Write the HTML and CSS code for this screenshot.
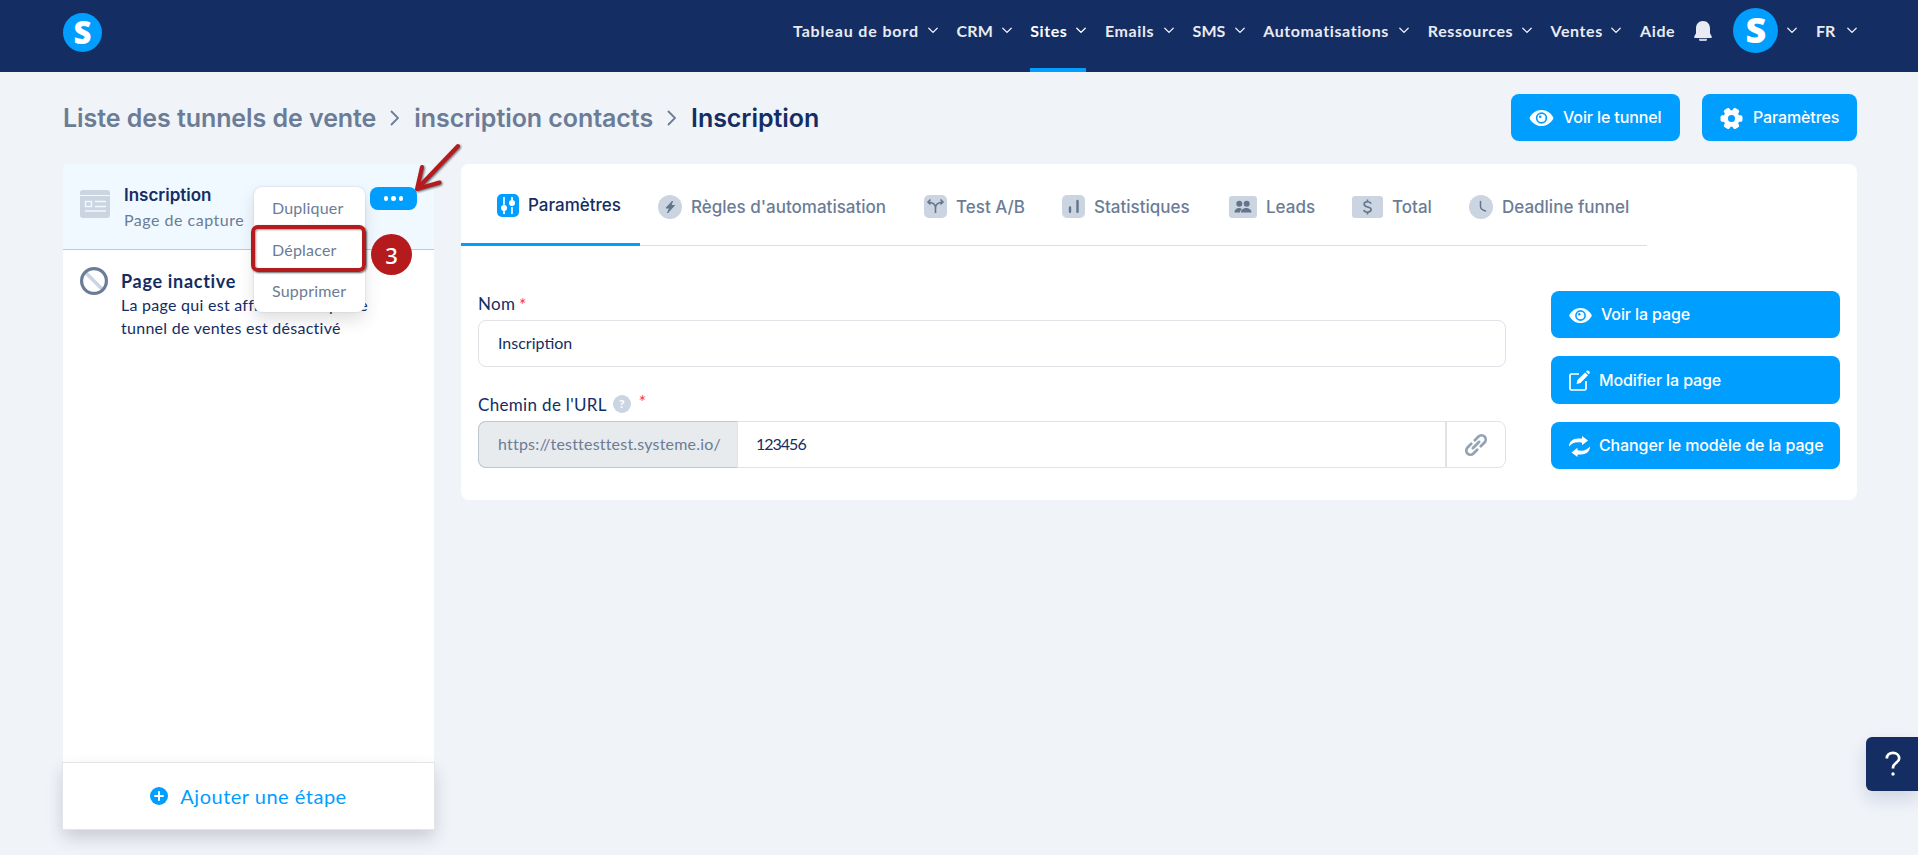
FILE: index.html
```html
<!DOCTYPE html>
<html lang="fr">
	<head>
		<meta charset="utf-8">
		<title>Inscription</title>
		<link rel="stylesheet" href="styles.css">
	</head>

	<body>
		<svg class="defs" width="0" height="0">
			<symbol id="down" viewBox="0 0 10 7"><path d="M.8 1.2L5 5.4 9.2 1.2" fill="none" stroke="currentColor" stroke-width="1.3" stroke-linecap="round"/></symbol>
			<symbol id="eye" viewBox="0 0 24 18"><path fill="currentColor" fill-rule="evenodd" d="M12 1C6.500 1 2.300 4.500.3 8.300a1.500 1.500 0 0 0 0 1.400C2.300 13.500 6.500 17 12 17s9.700-3.500 11.700-7.300a1.500 1.500 0 0 0 0-1.400C21.700 4.500 17.500 1 12 1zm0 2.300a5.700 5.700 0 1 1 0 11.400 5.700 5.700 0 0 1 0-11.400z"/><circle cx="12" cy="9" r="4" fill="currentColor"/><circle cx="10.700" cy="7.700" r="1.300" fill="#009eff"/></symbol>
		</svg>

		<header class="header">
			<div class="logo">S</div>
			<nav class="nav">
				<a class="w1">Tableau de bord<svg><use href="#down"/></svg></a>
				<a class="w2">CRM<svg><use href="#down"/></svg></a>
				<a class="w3 on">Sites<svg><use href="#down"/></svg></a>
				<a class="w4">Emails<svg><use href="#down"/></svg></a>
				<a class="w5">SMS<svg><use href="#down"/></svg></a>
				<a class="w6">Automatisations<svg><use href="#down"/></svg></a>
				<a class="w7">Ressources<svg><use href="#down"/></svg></a>
				<a class="w8">Ventes<svg><use href="#down"/></svg></a>
				<a class="w9">Aide</a>
				<svg class="bell" viewBox="0 0 18 20"><path fill="#e9ebf2" d="M9 0C4.500 0 2 3.300 2 7.500v4.800L.4 15.200c-.6 1 0 1.800 1 1.800h15.200c1 0 1.600-.8 1-1.800L16 12.300V7.500C16 3.300 13.500 0 9 0z"/><path fill="#c5cbdc" d="M5 17.800h8v.7c0 1-.8 1.500-1.700 1.500H6.700C5.800 20 5 19.500 5 18.500z"/></svg>
				<a class="user"><span class="logo avatar">S</span><svg><use href="#down"/></svg></a>
				<a class="lang">FR<svg><use href="#down"/></svg></a>
			</nav>
		</header>

		<div class="top">
			<div class="crumbs">
				<span>Liste des tunnels de vente</span>
				<svg viewBox="0 0 9 16"><path d="M1 1l7 7-7 7"/></svg>
				<span>inscription contacts</span>
				<svg viewBox="0 0 9 16"><path d="M1 1l7 7-7 7"/></svg>
				<b>Inscription</b>
			</div>
			<div class="actions">
				<a class="btn see"><svg width="25" height="18"><use href="#eye"/></svg>Voir le tunnel</a>
				<a class="btn conf"><svg width="23" height="23" viewBox="-12 -12 24 24"><g fill="#fff"><rect x="-3.500" y="-11.500" width="7" height="23" rx="2" transform="rotate(30)"/><rect x="-3.500" y="-11.500" width="7" height="23" rx="2" transform="rotate(90)"/><rect x="-3.500" y="-11.500" width="7" height="23" rx="2" transform="rotate(150)"/><circle r="8.600"/></g><circle r="3.700" fill="#009eff"/></svg>Paramètres</a>
			</div>
		</div>

		<div class="wrap">
			<aside class="side">
				<div class="step">
					<svg width="30" height="28" viewBox="0 0 30 28"><rect width="30" height="28" rx="3" fill="#cbd5e1"/><g fill="none" stroke="#f0f9ff"><path d="M0 5.500h30"/><rect x="5.500" y="11.500" width="6" height="5" stroke-width="1.400"/><path d="M15 11.500h11M15 16.500h11M5 21h21" stroke-width="1.400"/></g></svg>
					<div>
						<h3>Inscription</h3>
						<p>Page de capture</p>
					</div>
					<span class="dots"><i></i><i></i><i></i></span>
					<div class="menu">
						<a>Dupliquer</a>
						<a>Déplacer</a>
						<a>Supprimer</a>
					</div>
					<div class="frame"></div>
					<div class="num">3</div>
					<svg class="arrow" width="60" height="64" viewBox="0 0 60 64"><path d="M51 12L10 55M15 33L10 55M32.500 48.500L10 55"/></svg>
				</div>
				<div class="off">
					<svg width="28" height="28" viewBox="0 0 28 28"><path d="M6 6l16 16" stroke="#cbd5e1" stroke-width="3.500"/><circle cx="14" cy="14" r="12.400" fill="none" stroke="#6b7c96" stroke-width="3.200"/></svg>
					<div>
						<h3>Page inactive</h3>
						<p>La page qui est affichée lorsque le<br>tunnel de ventes est désactivé</p>
					</div>
				</div>
				<div class="add"><svg width="18" height="18" viewBox="0 0 18 18"><circle cx="9" cy="9" r="9" fill="#009eff"/><path d="M9 5v8M5 9h8" stroke="#fff" stroke-width="2" stroke-linecap="round"/></svg><span>Ajouter une étape</span></div>
			</aside>

			<main class="main">
				<div class="tabs">
					<a class="on t1"><svg width="22" height="23" viewBox="0 0 22 23"><rect width="22" height="23" rx="5" fill="#009eff"/><path d="M7 3.500v6M7 18v1.500M15 3.500v2M15 13.500v6" stroke="#fff" stroke-width="1.600" stroke-linecap="round"/><circle cx="7" cy="14" r="3" fill="#fff"/><circle cx="15" cy="9" r="3" fill="#fff"/><path d="M7 9v11M15 4v5" stroke="#fff" stroke-width="1.200"/></svg>Paramètres</a>
					<a class="t2"><svg width="24" height="24" viewBox="0 0 24 24"><circle cx="12" cy="12" r="12" fill="#cbd5e1"/><path fill="#64748b" stroke="#64748b" stroke-linejoin="round" d="M14.500 6L8 13h3.500l-2 5 7-7.500h-3.500z"/></svg>Règles d'automatisation</a>
					<a class="t3"><svg width="23" height="23" viewBox="0 0 23 23"><rect width="23" height="23" rx="5" fill="#cbd5e1"/><path d="M11.500 18v-5.500c0-4-3-5-7.500-5.500M11.500 12.500c0-4 3-5 7.500-5.500M6.500 4.500L4 7l2.500 2.500M16.500 4.500L19 7l-2.500 2.500" fill="none" stroke="#64748b" stroke-width="1.600"/></svg>Test A/B</a>
					<a class="t4"><svg width="23" height="23" viewBox="0 0 23 23"><rect width="23" height="23" rx="5" fill="#cbd5e1"/><path d="M8 12.500v4.300M15.500 6v10.800" stroke="#64748b" stroke-width="2.400" stroke-linecap="round"/></svg>Statistiques</a>
					<a class="t5"><svg width="28" height="22" viewBox="0 0 28 22"><rect width="28" height="22" rx="3" fill="#cbd5e1"/><g fill="#64748b"><circle cx="10.300" cy="7.700" r="3"/><circle cx="17.700" cy="7.700" r="3"/><path d="M5.500 16.500c0-3 2-4.500 4.500-4.500 1.300 0 2.300.4 3 1-1.300 1-1.900 2.200-2 3.500zM12 16.500c0-3 2.500-4.500 5.200-4.500s5.300 1.500 5.300 4.500z"/></g></svg>Leads</a>
					<a class="t6"><svg width="31" height="22" viewBox="0 0 31 22"><rect width="31" height="22" rx="3" fill="#cbd5e1"/><path d="M19 7.700C18.500 6.300 17.300 5.700 15.500 5.700c-2 0-3.400 1-3.400 2.500 0 3.700 7 1.800 7 5.400 0 1.600-1.500 2.600-3.600 2.600-2 0-3.300-.8-3.700-2.200M15.500 3.500v2M15.500 16.500v2" fill="none" stroke="#64748b" stroke-width="1.600"/></svg>Total</a>
					<a class="t7"><svg width="24" height="24" viewBox="0 0 24 24"><circle cx="12" cy="12" r="12" fill="#cbd5e1"/><path d="M11.500 6.500v5c0 2 1.500 3.500 5 4.500" fill="none" stroke="#64748b" stroke-width="1.500" stroke-linecap="round"/></svg>Deadline funnel</a>
				</div>

				<div class="body">
					<div class="form">
						<label>Nom<em>*</em></label>
						<div class="input"><span>Inscription</span></div>
						<label class="second">Chemin de l'URL<i class="q">?</i><em>*</em></label>
						<div class="input url">
							<span class="prefix">https://testtesttest.systeme.io/</span>
							<span class="path">123456</span>
							<span class="link"><svg width="24" height="24" viewBox="0 0 24 24"><g transform="rotate(-45 12 12)" fill="none" stroke="#94a3b3" stroke-width="2.700" stroke-linecap="round"><path d="M9.500 7.800H4.200a4.200 4.200 0 0 0 0 8.400h5.300M14.500 7.800h5.300a4.200 4.200 0 0 1 0 8.400h-5.300M7.500 12h9"/></g></svg></span>
						</div>
					</div>
					<div class="buttons">
						<a class="btn"><svg width="23" height="17"><use href="#eye"/></svg>Voir la page</a>
						<a class="btn tall"><svg width="21" height="21" viewBox="0 0 21 21"><path d="M10 4H2.500A1.500 1.500 0 0 0 1 5.500v13A1.500 1.500 0 0 0 2.500 20h13a1.500 1.500 0 0 0 1.500-1.500V11" fill="none" stroke="#fff" stroke-width="1.700"/><path d="M7.500 14l1-4 7.700-7.500 2.800 2.800-7.500 7.700zM17 1.700l.8-.9c1.400-1.400 4 1.200 2.600 2.600l-.7.900z" fill="#fff"/></svg>Modifier la page</a>
						<a class="btn"><svg width="21" height="21" viewBox="0 0 21 21"><path d="M0 10.500C0 5.500 4 2.500 9 2.500h4V0l6 4.500-6 4.800V6.700C7 5.500 3 7 0 10.500zM21 10.500c0 5-4 8-9 8H8.500V21l-6-4.500 6-4.800v2.600c6 1.200 9.500-.3 12.500-3.800z" fill="#fff"/></svg>Changer le modèle de la page</a>
					</div>
				</div>
			</main>
		</div>

		<div class="help"><svg width="16" height="26" viewBox="0 0 16 26"><path d="M1.800 7.500C1.800 4 4.500 1.800 8 1.800s6.200 2.400 6.200 5.600c0 4.200-6.200 4.600-6.200 9.100v1" fill="none" stroke="#fff" stroke-width="2.700"/><circle cx="8" cy="23" r="1.700" fill="#fff"/></svg></div>
	</body>
</html>
```
FILE: styles.css
```css
*{
	box-sizing: border-box;
}
body,h3,p{
	margin: 0;
	padding: 0;
}
body{
	height: 855px;
	overflow: hidden;
	background: #f0f3f8;
	color: #142d63;
	font-family: Lato, "Liberation Sans", sans-serif;
	font-size: 16px;
}
.defs{
	position: absolute;
}
.header{
	height: 72px;
	padding: 0 61px 0 63px;
	display: flex;
	justify-content: space-between;
	background: #142d63;
}
.logo{
	width: 39px;
	height: 39px;
	margin-top: 13px;
	border-radius: 50%;
	background: #009eff;
	color: #fff;
	font: 800 31px/38px "Open Sans", sans-serif;
	letter-spacing: 0;
	text-align: center;
}
.nav{
	display: flex;
	gap: 18.650px;
	color: #e9ebf2;
	font-weight: bold;
	letter-spacing: .6px;
}
.nav a{
	height: 72px;
	padding-bottom: 11px;
	display: flex;
	justify-content: space-between;
	align-items: center;
	white-space: nowrap;
}
.nav a svg{
	width: 10px;
	height: 7px;
	flex: none;
}
.nav .on{
	color: #fff;
	box-shadow: inset 0 -4px #009eff;
}
.w1{ width: 145px; letter-spacing: .85px; }
.w2{ width: 55px; letter-spacing: .1px; }
.w3{ width: 56px; }
.w4{ width: 69px; }
.w5{ width: 52px; letter-spacing: .1px; }
.w6{ width: 146px; }
.w7{ width: 104px; }
.w8{ width: 71px; }
.w9{ width: 34px; }
.bell{
	width: 18px;
	height: 20px;
	margin: 21px 0 0 1px;
}
.nav .user{
	width: 64px;
	margin-left: 3px;
}
.nav .lang{
	width: 41px;
	letter-spacing: 0;
}
.nav .avatar{
	width: 45px;
	height: 45px;
	margin: 0;
	font-size: 36px;
	line-height: 44px;
}
.top{
	height: 92px;
	padding: 22px 61px 0 63px;
	display: flex;
	justify-content: space-between;
}
.crumbs{
	height: 47px;
	display: flex;
	align-items: center;
	font: 600 25px Inter, sans-serif;
	letter-spacing: -.06px;
	color: #6b7c96;
}
.crumbs svg{
	width: 9px;
	height: 16px;
	margin: 0 15px 0 14px;
	fill: none;
	stroke: #6b7c96;
	stroke-width: 1.800;
}
.crumbs b{
	font-weight: 600;
	color: #142d63;
}
.actions{
	display: flex;
	gap: 22px;
}
.btn{
	height: 47px;
	padding: 0 0 1px 18px;
	display: flex;
	align-items: center;
	gap: 9px;
	border-radius: 8px;
	background: #009eff;
	color: #fff;
	font: 500 16px Inter, sans-serif;
	letter-spacing: -.12px;
	white-space: nowrap;
}
.btn svg{
	position: relative;
	top: 1px;
}
.see{
	width: 169px;
}
.conf{
	width: 155px;
	gap: 10px;
}
.wrap{
	padding: 0 61px 0 63px;
	display: flex;
	align-items: flex-start;
	gap: 27px;
}
.side{
	width: 371px;
	height: 666px;
	display: flex;
	flex-direction: column;
	background: #fff;
	border-radius: 6px 6px 0 0;
}
.step{
	position: relative;
	height: 86px;
	padding: 20px 0 0 17px;
	display: flex;
	gap: 14px;
	border-radius: 6px 6px 0 0;
	border-bottom: 1px solid #b9cbdb;
	background: #f0f9ff;
}
.step > svg:first-child{
	margin-top: 6px;
}
h3{
	font: 600 17px/22px Inter, sans-serif;
}
.step p{
	margin-top: 3px;
	line-height: 22px;
	letter-spacing: .5px;
	color: #6b7c96;
}
.dots{
	position: absolute;
	left: 307px;
	top: 23px;
	width: 47px;
	height: 23px;
	display: flex;
	justify-content: center;
	align-items: center;
	gap: 2.800px;
	border-radius: 8px;
	background: #009eff;
}
.dots i{
	width: 4.700px;
	height: 4.700px;
	border-radius: 50%;
	background: #fff;
}
.menu{
	position: absolute;
	left: 191px;
	top: 23px;
	width: 111px;
	height: 125px;
	border-radius: 8px;
	background: #fff;
	box-shadow: 0 0 2px rgba(20,45,99,.2), 0 8px 16px rgba(60,60,70,.16);
	color: #6b7c96;
	letter-spacing: .2px;
}
.menu a{
	display: block;
	height: 41.500px;
	padding-left: 18px;
	line-height: 42px;
}
.frame{
	position: absolute;
	left: 188px;
	top: 61px;
	width: 115px;
	height: 47px;
	border: 4px solid #b51a1d;
	border-radius: 7px;
	box-shadow: 1px 1px 2px rgba(0,0,0,.6), inset 1px 1px 2px rgba(0,0,0,.4);
}
.num{
	position: absolute;
	left: 308px;
	top: 70px;
	width: 41px;
	height: 41px;
	border-radius: 50%;
	background: #b51a1d;
	color: #fff;
	font: 500 22px/42px "Noto Sans", sans-serif;
	text-align: center;
}
.arrow{
	position: absolute;
	left: 344px;
	top: -30px;
	fill: none;
	stroke: #b51a1d;
	stroke-width: 4;
	stroke-linecap: round;
	filter: drop-shadow(1px 1px 1px rgba(0,0,0,.6));
}
.off{
	padding: 17px 0 0 17px;
	display: flex;
	gap: 13px;
}
.off h3{
	margin-top: 3px;
	font: bold 18px/22px Lato, sans-serif;
	letter-spacing: .7px;
}
.off p{
	margin-top: 1px;
	line-height: 23px;
	letter-spacing: .27px;
	white-space: nowrap;
}
.add{
	height: 66px;
	margin-top: auto;
	margin-bottom: 1px;
	padding-bottom: 1px;
	display: flex;
	justify-content: center;
	align-items: center;
	gap: 12px;
	box-shadow: 0 0 0 1px #e3e5e9, 0 8px 16px rgba(40,45,60,.2);
	color: #009eff;
	font-size: 20px;
	letter-spacing: .5px;
}
.main{
	flex: 1;
	height: 336px;
	border-radius: 8px;
	background: #fff;
}
.tabs{
	width: 1186px;
	height: 82px;
	display: flex;
	border-bottom: 1px solid #d9deeb;
	color: #6b7c96;
	font: 500 17px Inter, sans-serif;
}
.tabs a{
	height: 82px;
	padding-top: 3px;
	display: flex;
	align-items: center;
	gap: 9px;
	white-space: nowrap;
	flex: none;
}
.tabs .on{
	padding: 3px 0 0 36px;
	border-bottom: 3px solid #009eff;
	color: #142d63;
}
.t1{ width: 179px; margin-right: 18px; }
.t2{ width: 266px; }
.t3{ width: 138px; }
.t4{ width: 167px; }
.t5{ width: 123px; }
.t6{ width: 117px; }
.body{
	padding: 45px 17px 0;
	display: flex;
	justify-content: space-between;
}
.form{
	width: 1028px;
	padding-top: 1px;
}
label{
	height: 28px;
	display: flex;
	font-size: 17px;
	line-height: 23px;
	letter-spacing: .33px;
}
.second{
	margin-top: 26px;
}
label em{
	margin-left: 3px;
	color: #ff3b53;
	font-size: 19px;
	line-height: 25px;
}
.second em{
	margin-left: 7px;
	line-height: 18px;
}
.q{
	width: 18px;
	height: 18px;
	margin: 2px 0 0 6px;
	border-radius: 50%;
	background: #cbd5e1;
	color: #fff;
	font: 900 12px/18px Lato, sans-serif;
	text-align: center;
}
.input{
	height: 47px;
	padding: 0 0 2px 19px;
	display: flex;
	align-items: center;
	border: 1px solid #dfe3e7;
	border-radius: 8px;
}
.url{
	padding: 0;
	align-items: stretch;
	line-height: 44px;
}
.prefix{
	width: 260px;
	margin: -1px 0 -1px -1px;
	padding-left: 19px;
	border: 1px solid #bfc8d0;
	border-right-color: #dfe3e7;
	border-radius: 8px 0 0 8px;
	background: #e7ebee;
	color: #6b7c96;
	letter-spacing: .2px;
}
.path{
	flex: 1;
	padding-left: 18px;
	letter-spacing: -1px;
}
.link{
	width: 60px;
	display: flex;
	justify-content: center;
	align-items: center;
	border-left: 2px solid #dfe3e7;
}
.buttons{
	width: 289px;
	display: flex;
	flex-direction: column;
	gap: 18px;
}
.tall{
	height: 48px;
}
.help{
	position: absolute;
	right: 0;
	top: 737px;
	width: 52px;
	height: 54px;
	padding-left: 1px;
	display: flex;
	justify-content: center;
	align-items: center;
	border-radius: 6px 0 0 6px;
	background: #142d63;
	box-shadow: 0 8px 18px rgba(20,45,99,.15);
}
```
